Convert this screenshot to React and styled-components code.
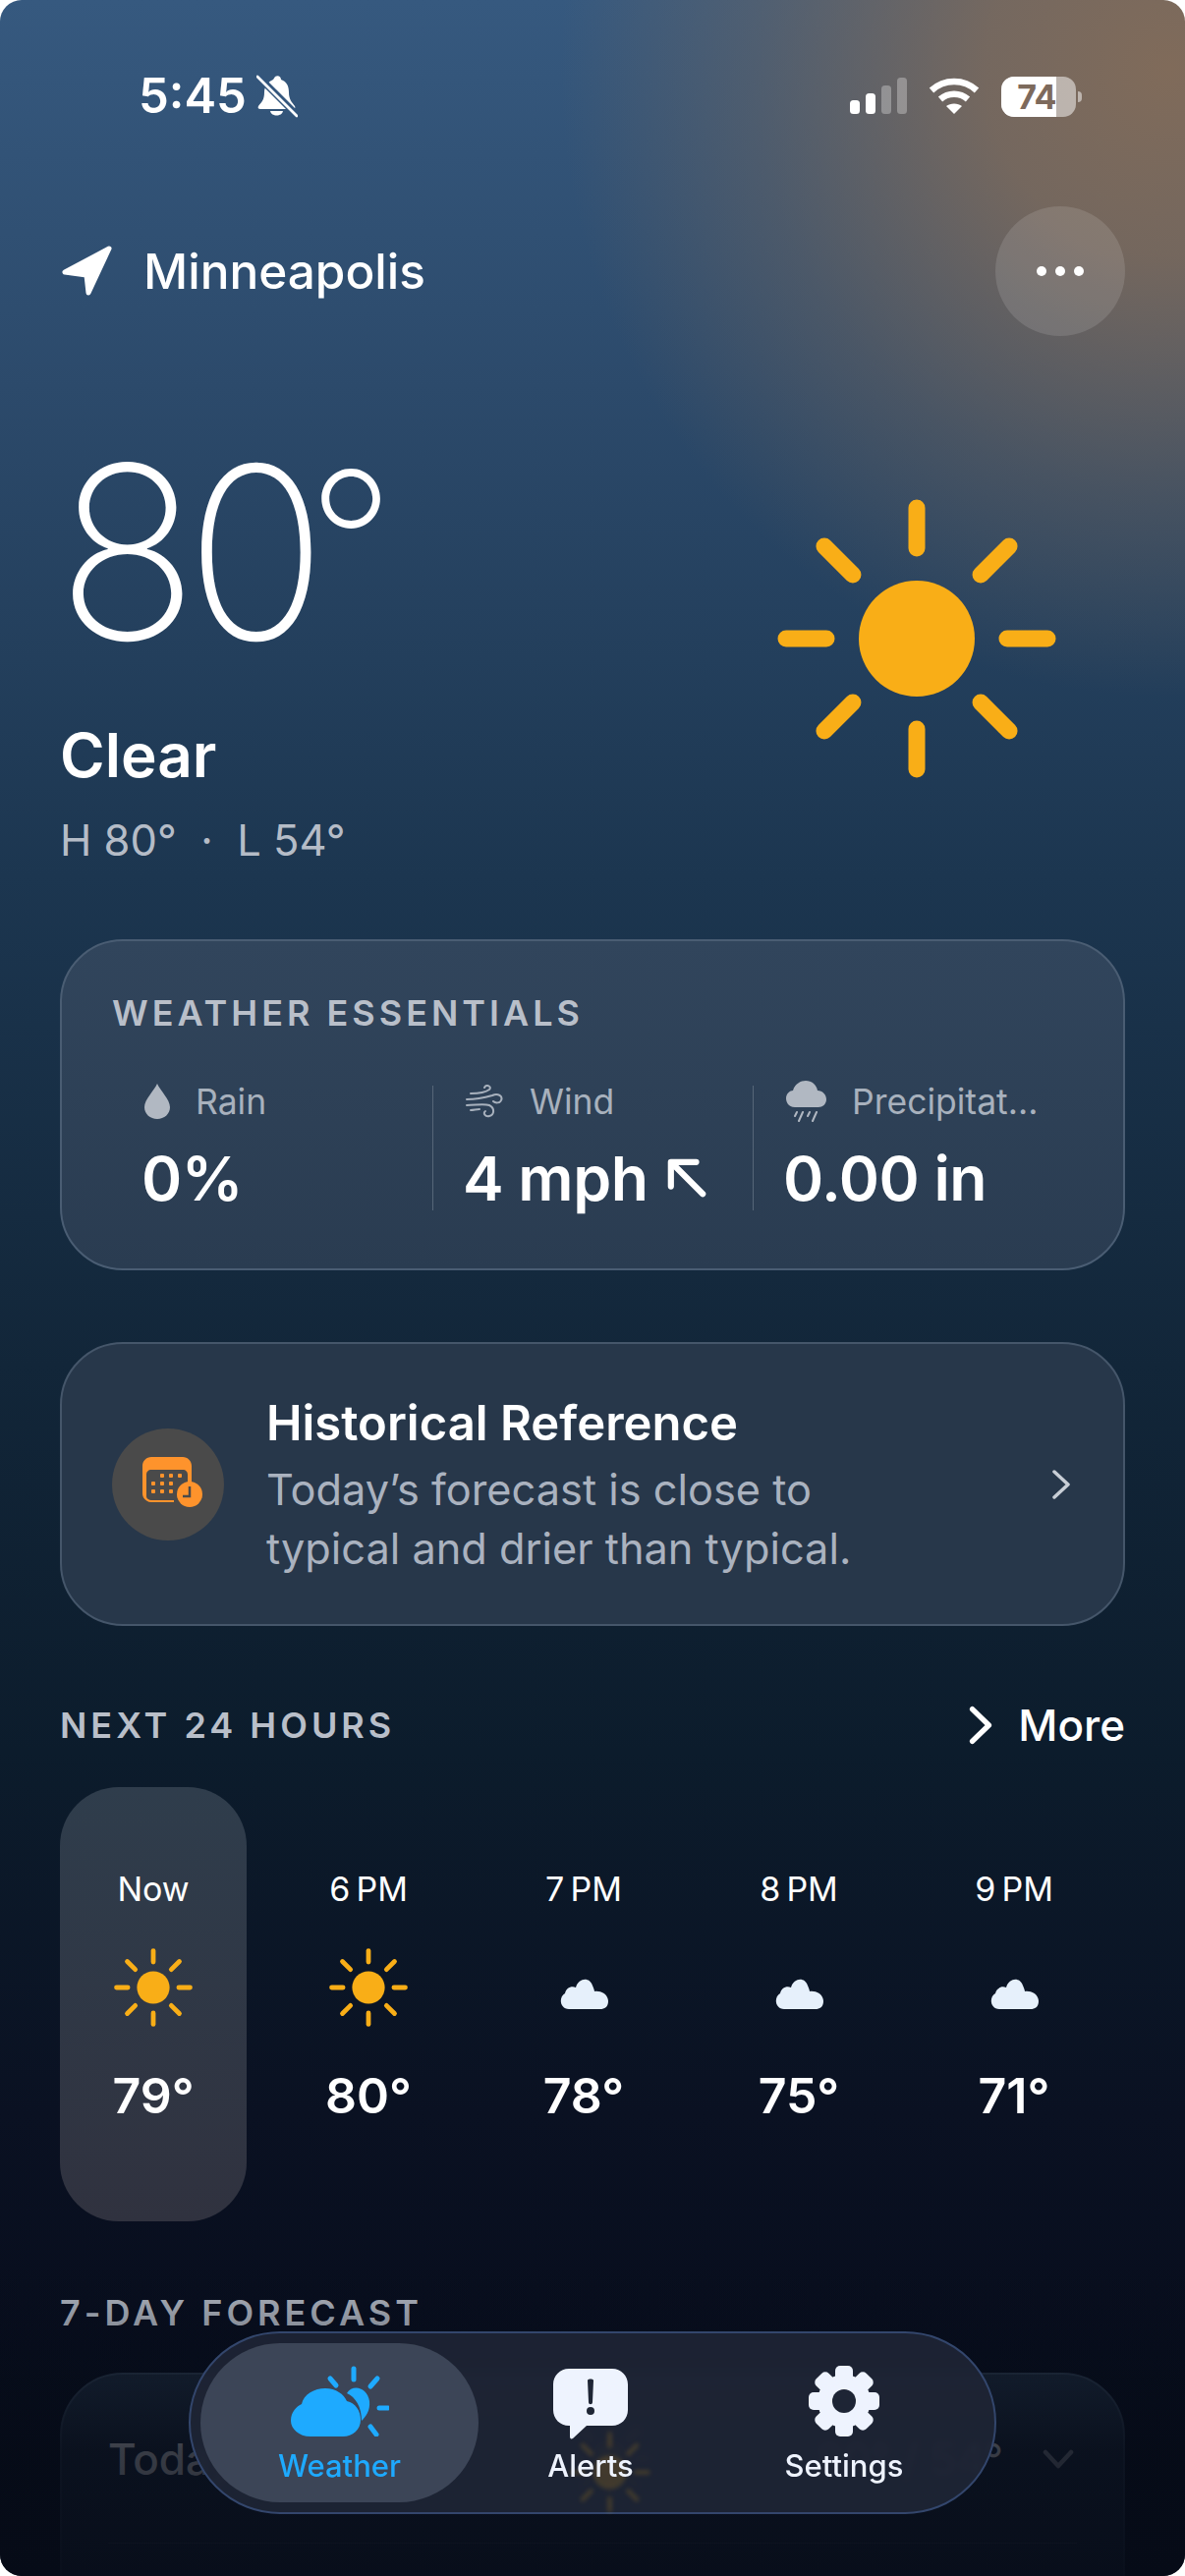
import React from 'react'
import styled, { createGlobalStyle } from 'styled-components'

const GlobalStyle = createGlobalStyle`
  html, body { margin: 0; padding: 0; background: #fff; }
  * { box-sizing: border-box; }
  body { font-family: "Inter", "Liberation Sans", sans-serif; -webkit-font-smoothing: antialiased; }
`

const hours = [
  { time: 'Now', temp: '79°', icon: 'sun', active: true },
  { time: '6\u2009PM', temp: '80°', icon: 'sun' },
  { time: '7\u2009PM', temp: '78°', icon: 'cloud' },
  { time: '8\u2009PM', temp: '75°', icon: 'cloud' },
  { time: '9\u2009PM', temp: '71°', icon: 'cloud' },
]

const SunIcon = ({ size = 284 }) => (
  <svg width={size} height={size} viewBox="0 0 284 284">
    <circle cx="142" cy="142" r="59" fill="#f9ae17" />
    {[0, 45, 90, 135, 180, 225, 270, 315].map((a) => (
      <line key={a} x1="142" y1="9" x2="142" y2="50" stroke="#f9ae17" strokeWidth="17" strokeLinecap="round" transform={`rotate(${a} 142 142)`} />
    ))}
  </svg>
)

const CloudIcon = () => (
  <svg width="83" height="83" viewBox="0 0 83 83">
    <path d="M26 62 C17 62 15 50 22 46 C23 41 28 38 33 40 C36 30 47 29 50 38 C51 40 52 43 52 44 C60 43 66 48 66 54 C66 60 62 62 58 62 Z" fill="#e6f0fb" />
  </svg>
)

const Signal = () => (
  <svg width="58" height="38" viewBox="0 0 58 38">
    <rect x="0" y="23" width="10" height="14" rx="3.5" fill="#fff" />
    <rect x="16" y="16" width="10" height="21" rx="3.5" fill="#fff" />
    <rect x="32" y="8" width="10" height="29" rx="3.5" fill="#fff" opacity=".3" />
    <rect x="48" y="0" width="10" height="37" rx="3.5" fill="#fff" opacity=".3" />
  </svg>
)

const Wifi = () => (
  <svg width="52" height="38" viewBox="0 0 52 38" fill="none" stroke="#fff" strokeWidth="6.5">
    <path d="M3 13 C16 1 36 1 49 13" />
    <path d="M12 22 C20 15 32 15 40 22" />
    <path d="M26 37 L18 29 C22 25.500 30 25.500 34 29 Z" fill="#fff" stroke="none" />
  </svg>
)

const BellOff = () => (
  <svg width="42" height="44" viewBox="0 0 42 44">
    <path d="M19 2 C22 0 25 2 25 5 C31 7 33 12 33 18 C33 25 36 28 39 32 C40 34 39 35 37 35 L4 35 C2 35 1 34 2 32 C5 28 8 26 8 18 C8 12 12 7 17 5 Z" fill="#fff" />
    <path d="M14 37 C15 43 26 43 27 37 Z" fill="#fff" />
    <line x1="2" y1="2" x2="40" y2="40" stroke="#33567d" strokeWidth="7" />
    <line x1="1" y1="2" x2="41" y2="42" stroke="#fff" strokeWidth="2.800" strokeLinecap="round" />
  </svg>
)

const LocationArrow = () => (
  <svg width="54" height="52" viewBox="0 0 54 52">
    <path d="M50 3 L5 27 L27 30 L29 48 Z" fill="#fff" stroke="#fff" strokeWidth="5" strokeLinejoin="round" />
  </svg>
)

const DropIcon = () => (
  <svg width="26" height="36" viewBox="0 0 26 36">
    <path d="M13 0 C16 7 26 16 26 24 C26 31 20 36 13 36 C6 36 0 31 0 24 C0 16 10 7 13 0 Z" fill="#b1b8c2" />
  </svg>
)

const WindIcon = () => (
  <svg width="39" height="34" viewBox="0 0 39 34" fill="none" stroke="#a8b1bd" strokeWidth="2" strokeLinecap="round">
    <path d="M5 9 C12 9 20 8 24 5 C27 2 21 -1 19 3" />
    <path d="M1 15 C10 15 20 13 27 11 C33 8 38 12 36 16 C35 19 30 19 28 17" />
    <path d="M1 21 C10 21 18 19 24 21 C30 24 29 31 24 32 C20 33 17 29 20 27" />
    <path d="M5 26 C8 26 11 25 14 25" />
  </svg>
)

const RainCloudIcon = () => (
  <svg width="41" height="42" viewBox="0 0 41 42">
    <path d="M9 27 C2 27 0 21 0 18 C0 13 4 10 7 10 C9 3 15 0 20 0 C26 0 31 4 32 10 C37 10 41 14 41 19 C41 24 37 27 33 27 Z" fill="#b1b8c2" />
    <g stroke="#b1b8c2" strokeWidth="2" strokeLinecap="round">
      <line x1="11" y1="32" x2="9" y2="36" />
      <line x1="17" y1="32" x2="13" y2="41" />
      <line x1="24" y1="32" x2="22" y2="36" />
      <line x1="31" y1="32" x2="27" y2="41" />
    </g>
  </svg>
)

const NorthWestArrow = () => (
  <svg width="40" height="40" viewBox="0 0 42 42" fill="none" stroke="#fff" strokeWidth="6.500" strokeLinecap="round" strokeLinejoin="round">
    <path d="M4 30 L4 4 L31 4" />
    <path d="M5 5 L38 38" />
  </svg>
)

const CalendarIcon = () => (
  <svg width="64" height="56" viewBox="0 0 64 56">
    <path d="M9 0 H41 C46 0 50 4 50 9 V30 H46 V18 C46 15 44 13 41 13 H9 C6 13 4 15 4 18 V40 C4 42 6 44 9 44 H32 V46 H9 C4 46 0 42 0 37 V9 C0 4 4 0 9 0 Z" fill="#fe932c" />
    {[[20, 19], [29, 19], [38, 19], [11, 27], [20, 27], [29, 27], [11, 35], [20, 35], [29, 35]].map(([x, y]) => (
      <rect key={`${x}-${y}`} x={x - 2} y={y - 2} width="4" height="4" rx="1" fill="#fe932c" />
    ))}
    <circle cx="48" cy="38" r="13" fill="#fe932c" />
    <path d="M48 30 V40 H41" fill="none" stroke="#4a4a4a" strokeWidth="2.500" />
  </svg>
)

const ChevronRight = ({ w = 20, h = 32, color = '#c8ced6', sw = 3.500 }) => (
  <svg width={w} height={h} viewBox="0 0 20 32" fill="none" stroke={color} strokeWidth={sw} strokeLinecap="round" strokeLinejoin="round" preserveAspectRatio="none">
    <path d="M3 3 L17 16 L3 29" />
  </svg>
)

const ChevronDown = () => (
  <svg width="32" height="20" viewBox="0 0 32 20" fill="none" stroke="#9aa0aa" strokeWidth="4.500" strokeLinecap="round" strokeLinejoin="round">
    <path d="M3 3 L16 17 L29 3" />
  </svg>
)

const WeatherTabIcon = () => (
  <svg width="100" height="72" viewBox="0 0 100 72">
    <g stroke="#1eaaff" strokeWidth="5" strokeLinecap="round">
      <line x1="64" y1="3" x2="64" y2="14" />
      <line x1="40" y1="13" x2="46" y2="20" />
      <line x1="88" y1="13" x2="81" y2="21" />
      <line x1="90" y1="43" x2="99" y2="43" />
      <line x1="81" y1="62" x2="87" y2="70" />
    </g>
    <path d="M57 28 C63 18 78 22 80 36 C81 46 76 52 72 56 C72 42 66 32 57 28 Z" fill="#1eaaff" />
    <path d="M20 72 C8 72 0 64 0 56 C0 47 6 41 11 39 C13 29 24 23 35 23 C46 23 54 29 57 36 C66 38 71 46 71 55 C71 65 63 72 53 72 Z" fill="#1eaaff" />
  </svg>
)

const AlertTabIcon = () => (
  <svg width="76" height="72" viewBox="0 -3 76 72" overflow="visible">
    <path d="M16 0 H60 C69 0 76 7 76 16 V42 C76 51 69 58 60 58 H34 L20 71 C18 72 17 71 17 69 V58 H16 C7 58 0 51 0 42 V16 C0 7 7 0 16 0 Z" fill="#eef3fe" />
    <path d="M35 12 C35 10 41 10 41 12 L40 34 C40 37 36 37 36 34 Z" fill="#1e2535" />
    <circle cx="38" cy="43" r="4" fill="#1e2535" />
  </svg>
)

const GearTabIcon = () => (
  <svg width="72" height="72" viewBox="0 0 72 72">
    <circle cx="36" cy="36" r="27" fill="#eef3fe" />
    {[0, 45, 90, 135, 180, 225, 270, 315].map((a) => (
      <rect key={a} x="27" y="0" width="18" height="18" rx="5" fill="#eef3fe" transform={`rotate(${a} 36 36)`} />
    ))}
    <circle cx="36" cy="36" r="12" fill="#1e2535" />
  </svg>
)

const App = () => {
  return (
    <>
      <GlobalStyle />
      <Screen>
        <StatusBar>
          <StatusLeft>
            <Clock>5:45</Clock>
            <BellOff />
          </StatusLeft>
          <StatusRight>
            <Signal />
            <Wifi />
            <Battery>
              <BatteryFill>74</BatteryFill>
              <BatteryNub />
            </Battery>
          </StatusRight>
        </StatusBar>

        <Header>
          <Place>
            <LocationArrow />
            <PlaceName>Minneapolis</PlaceName>
          </Place>
          <MoreButton>
            <Dot /><Dot /><Dot />
          </MoreButton>
        </Header>

        <Hero>
          <div>
            <BigTemp>80<Degree>°</Degree></BigTemp>
            <Condition>Clear</Condition>
            <HighLow>H 80°&nbsp; · &nbsp;L 54°</HighLow>
          </div>
          <HeroSun>
            <SunIcon />
          </HeroSun>
        </Hero>

        <EssentialsCard>
          <SectionTitle>WEATHER ESSENTIALS</SectionTitle>
          <Metrics>
            <Metric>
              <MetricLabel><DropIcon />Rain</MetricLabel>
              <MetricValue>0%</MetricValue>
            </Metric>
            <Metric $divided>
              <MetricLabel><WindIcon />Wind</MetricLabel>
              <MetricValue>4 mph <NorthWestArrow /></MetricValue>
            </Metric>
            <Metric $divided>
              <MetricLabel><RainCloudIcon />Precipitat...</MetricLabel>
              <MetricValue>0.00 in</MetricValue>
            </Metric>
          </Metrics>
        </EssentialsCard>

        <ReferenceCard>
          <IconCircle><CalendarIcon /></IconCircle>
          <ReferenceText>
            <ReferenceTitle>Historical Reference</ReferenceTitle>
            <ReferenceBody>Today’s forecast is close to<br />typical and drier than typical.</ReferenceBody>
          </ReferenceText>
          <ReferenceChevron><ChevronRight /></ReferenceChevron>
        </ReferenceCard>

        <HoursHeader>
          <SectionTitle>NEXT 24 HOURS</SectionTitle>
          <MoreLink>
            <ChevronRight w={24} h={40} color="#fff" sw={4.500} />
            More
          </MoreLink>
        </HoursHeader>

        <HoursRow>
          {hours.map((h) => (
            <HourColumn key={h.time} $active={h.active}>
              <HourTime>{h.time}</HourTime>
              <HourIcon>{h.icon === 'sun' ? <SunIcon size={80} /> : <CloudIcon />}</HourIcon>
              <HourTemp>{h.temp}</HourTemp>
            </HourColumn>
          ))}
        </HoursRow>

        <ForecastTitle>7-DAY FORECAST</ForecastTitle>
        <ForecastCard>
          <ForecastRow>
            <ForecastDay>Today</ForecastDay>
            <SunIcon size={83} />
            <ForecastRange>80° / 54°</ForecastRange>
            <ChevronDown />
          </ForecastRow>
        </ForecastCard>

        <BottomFade />

        <TabBar>
          <GhostSun>
            <SunIcon size={83} />
          </GhostSun>
          <Tab $active>
            <WeatherTabIcon />
            <TabLabel $active>Weather</TabLabel>
          </Tab>
          <Tab>
            <AlertTabIcon />
            <TabLabel>Alerts</TabLabel>
          </Tab>
          <Tab>
            <GearTabIcon />
            <TabLabel>Settings</TabLabel>
          </Tab>
        </TabBar>
      </Screen>
    </>
  )
}

export default App

const Screen = styled.div`
  position: relative;
  width: 1206px;
  height: 2622px;
  overflow: hidden;
  border-radius: 22px;
  padding: 0 61px;
  color: #fff;
  background:
    radial-gradient(ellipse 620px 640px at 1190px 70px, rgba(128, 107, 90, 1) 0%, rgba(128, 107, 90, 0.85) 30%, rgba(128, 107, 90, 0.35) 68%, rgba(128, 107, 90, 0) 100%),
    linear-gradient(180deg, #36597f 0%, #2c4a6b 15%, #1c3650 34%, #122639 53%, #0c1c2c 68%, #0a1122 82%, #080e1e 90%, #060c18 100%);
`

const StatusBar = styled.div`
  height: 196px;
  margin: 0 -61px;
  padding: 0 111px 0 141px;
  display: flex;
  align-items: center;
  justify-content: space-between;
`

const StatusLeft = styled.div`
  display: flex;
  align-items: center;
  gap: 10px;
`

const Clock = styled.span`
  font-size: 49px;
  line-height: 50px;
  font-weight: 600;
`

const StatusRight = styled.div`
  display: flex;
  align-items: center;
  gap: 22px;
`

const Battery = styled.div`
  position: relative;
  width: 76px;
  height: 41px;
  border-radius: 13px;
  background: rgba(255, 255, 255, 0.5);
  overflow: visible;
`

const BatteryFill = styled.div`
  width: 56px;
  height: 41px;
  border-radius: 13px 0 0 13px;
  background: #fff;
  color: #7d6a5c;
  font-size: 34px;
  font-weight: 700;
  line-height: 41px;
  text-align: right;
  letter-spacing: -0.5px;
`

const BatteryNub = styled.div`
  position: absolute;
  top: 15px;
  right: -6px;
  width: 4px;
  height: 11px;
  border-radius: 0 4px 4px 0;
  background: rgba(255, 255, 255, 0.5);
`

const Header = styled.div`
  margin-top: 14px;
  height: 132px;
  display: flex;
  align-items: center;
  justify-content: space-between;
`

const Place = styled.div`
  display: flex;
  align-items: center;
  gap: 31px;
`

const PlaceName = styled.span`
  font-size: 49.5px;
  line-height: 60px;
  font-weight: 500;
`

const MoreButton = styled.div`
  width: 132px;
  height: 132px;
  border-radius: 50%;
  background: rgba(255, 255, 255, 0.12);
  display: flex;
  align-items: center;
  justify-content: center;
  gap: 9px;
`

const Dot = styled.span`
  width: 10px;
  height: 10px;
  border-radius: 50%;
  background: #fff;
`

const Hero = styled.div`
  padding-top: 98px;
  display: flex;
  justify-content: space-between;
  align-items: flex-start;
`

const HeroSun = styled.div`
  margin: 68px 70px 0 0;
`

const BigTemp = styled.div`
  margin-left: -3px;
  font-size: 245px;
  line-height: 245px;
  font-weight: 250;
  letter-spacing: -13px;
  transform: scaleX(0.97);
  transform-origin: left center;
`

const Degree = styled.span`
  margin-left: -7px;
  font-size: 200px;
  line-height: 0;
  letter-spacing: 0;
  vertical-align: 27px;
`

const Condition = styled.div`
  margin-top: 44px;
  font-size: 62px;
  line-height: 80px;
  font-weight: 600;
`

const HighLow = styled.div`
  margin-top: 16px;
  font-size: 43.5px;
  line-height: 60px;
  color: #b5bcc7;
`

const EssentialsCard = styled.div`
  margin-top: 71px;
  height: 337px;
  padding: 51px 51px 0;
  border: 2px solid #4a5d73;
  border-radius: 64px;
  background: linear-gradient(180deg, #31455c 0%, #2a3c51 100%);
`

const SectionTitle = styled.div`
  font-size: 36px;
  line-height: 44px;
  font-weight: 600;
  letter-spacing: 4px;
  color: #b9bfc9;
`

const Metrics = styled.div`
  margin-top: 52px;
  display: grid;
  grid-template-columns: repeat(3, 1fr);
`

const Metric = styled.div`
  height: 127px;
  padding-left: 33px;
  border-left: ${(props) => (props.$divided ? '1px solid #566678' : 'none')};
`

const MetricLabel = styled.div`
  height: 32px;
  display: flex;
  align-items: center;
  gap: 26px;
  font-size: 35.5px;
  color: #a8b1bd;
  white-space: nowrap;
`

const MetricValue = styled.div`
  margin: 30px 0 0 -3px;
  display: flex;
  align-items: center;
  gap: 20px;
  font-size: 62.5px;
  line-height: 64px;
  font-weight: 600;
  letter-spacing: -0.5px;
  white-space: nowrap;
`

const ReferenceCard = styled.div`
  margin-top: 73px;
  height: 289px;
  padding: 0 53px 0 51px;
  display: flex;
  align-items: center;
  gap: 43px;
  border: 2px solid #45566a;
  border-radius: 64px;
  background: #27374a;
`

const IconCircle = styled.div`
  width: 114px;
  height: 114px;
  border-radius: 50%;
  background: #4a4a4a;
  display: flex;
  align-items: center;
  justify-content: center;
  padding-left: 12px;
  flex-shrink: 0;
`

const ReferenceText = styled.div`
  flex: 1;
  padding-top: 3px;
`

const ReferenceTitle = styled.div`
  font-size: 49px;
  line-height: 60px;
  font-weight: 600;
`

const ReferenceBody = styled.div`
  margin-top: 7px;
  font-size: 43.3px;
  line-height: 60px;
  color: #aab2bf;
`

const ReferenceChevron = styled.div`
  display: flex;
`

const HoursHeader = styled.div`
  margin-top: 71px;
  height: 60px;
  display: flex;
  align-items: center;
  justify-content: space-between;
`

const MoreLink = styled.div`
  display: flex;
  align-items: center;
  gap: 26px;
  font-size: 44px;
  font-weight: 500;
`

const HoursRow = styled.div`
  margin-top: 33px;
  display: grid;
  grid-template-columns: repeat(5, 190px);
  gap: 29px;
`

const HourColumn = styled.div`
  height: 442px;
  padding-top: 82px;
  border-radius: 60px;
  display: flex;
  flex-direction: column;
  align-items: center;
  background: ${(props) => (props.$active ? 'linear-gradient(180deg, #2f3d4c 0%, #30323f 100%)' : 'transparent')};
`

const HourTime = styled.div`
  font-size: 34px;
  line-height: 44px;
`

const HourIcon = styled.div`
  margin-top: 38px;
  height: 83px;
`

const HourTemp = styled.div`
  margin-top: 35px;
  font-size: 50px;
  line-height: 64px;
  font-weight: 600;
`

const ForecastTitle = styled(SectionTitle)`
  margin-top: 71px;
`

const ForecastCard = styled.div`
  margin-top: 39px;
  height: 400px;
  padding: 0 47px;
  border: 2px solid #2b3a4d;
  border-radius: 64px;
  background: #1c2a3c;
`

const ForecastRow = styled.div`
  height: 172px;
  padding-right: 3px;
  display: grid;
  grid-template-columns: 469px 83px 1fr 32px;
  align-items: center;
  border-bottom: 1px solid #3a4858;
`

const ForecastDay = styled.div`
  font-size: 44px;
  font-weight: 500;
`

const ForecastRange = styled.div`
  padding-right: 40px;
  text-align: right;
  font-size: 44px;
`

const BottomFade = styled.div`
  position: absolute;
  left: 0;
  right: 0;
  bottom: 0;
  height: 322px;
  background: linear-gradient(180deg, rgba(6, 11, 23, 0) 0%, rgba(6, 11, 23, 0.25) 20%, rgba(6, 11, 23, 0.8) 60%, rgba(6, 11, 23, 0.9) 100%);
`

const TabBar = styled.div`
  position: absolute;
  left: 192px;
  top: 2373px;
  width: 822px;
  height: 186px;
  padding: 10px;
  display: grid;
  grid-template-columns: 283px 228px 288px;
  border: 2px solid #33466c;
  border-radius: 93px;
  background: rgba(30, 37, 53, 0.93);
  backdrop-filter: blur(3px);
`

const GhostSun = styled.div`
  position: absolute;
  left: 385px;
  top: 100px;
  opacity: 0.16;
  filter: blur(2px);
`

const Tab = styled.div`
  position: relative;
  display: flex;
  flex-direction: column;
  align-items: center;
  padding-top: 23px;
  gap: 13px;
  border-radius: 84px;
  background: ${(props) => (props.$active ? '#3c4557' : 'transparent')};
`

const TabLabel = styled.div`
  font-size: 31px;
  line-height: 34px;
  font-weight: 500;
  color: ${(props) => (props.$active ? '#1eaaff' : '#eef3fe')};
`
